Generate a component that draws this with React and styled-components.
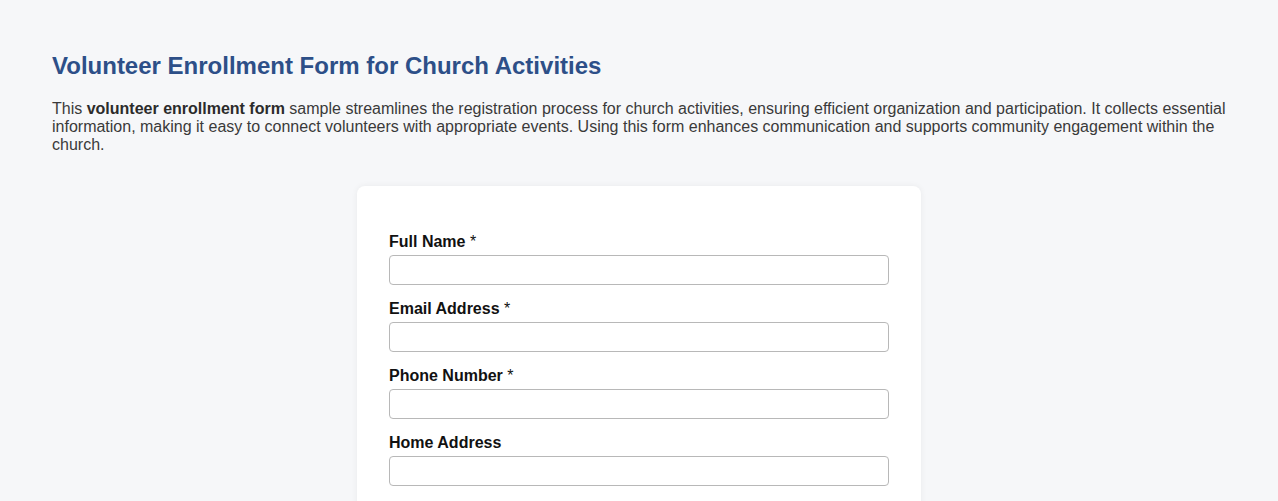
import React from "react";
import styled, { createGlobalStyle } from "styled-components";

const GlobalStyle = createGlobalStyle`
  body {
    margin: 0;
    background: #f6f7f9;
    font-family: "Liberation Sans", Arial, sans-serif;
  }
`;

const Page = styled.div`
  padding: 52px 52px 40px;
`;

const Title = styled.h1`
  margin: 0 0 20px;
  font-size: 24px;
  line-height: 28px;
  font-weight: 700;
  color: #2d4f88;
`;

const Intro = styled.p`
  margin: 0 0 32px;
  font-size: 16px;
  line-height: 18px;
  color: #3a3a3a;

  strong {
    color: #2b2b2b;
  }
`;

const Card = styled.form`
  width: 564px;
  box-sizing: border-box;
  margin: 0 auto;
  padding: 46px 32px 32px;
  background: #fff;
  border-radius: 8px;
  box-shadow: 0 0 6px rgba(0, 0, 0, 0.06);
`;

const Field = styled.div`
  display: flex;
  flex-direction: column;
  margin-bottom: 14px;
`;

const Label = styled.label`
  font-size: 16px;
  line-height: 20px;
  font-weight: 700;
  color: #111;
  margin-bottom: 3px;
`;

const Required = styled.span`
  font-weight: 400;
`;

const Input = styled.input`
  height: 30px;
  box-sizing: border-box;
  border: 1px solid #b8b8b8;
  border-radius: 4px;
  padding: 4px 8px;
  font-size: 15px;
  font-family: inherit;
  background: #fff;
`;

const fields = [
  { id: "name", label: "Full Name", type: "text", required: true },
  { id: "email", label: "Email Address", type: "email", required: true },
  { id: "phone", label: "Phone Number", type: "tel", required: true },
  { id: "address", label: "Home Address", type: "text" },
];

export default function App() {
  return (
    <Page>
      <GlobalStyle />
      <Title>Volunteer Enrollment Form for Church Activities</Title>
      <Intro>
        This <strong>volunteer enrollment form</strong> sample streamlines the
        registration process for church activities, ensuring efficient
        organization and participation. It collects essential information,
        making it easy to connect volunteers with appropriate events. Using this
        form enhances communication and supports community engagement within
        the church.
      </Intro>
      <Card onSubmit={(e) => e.preventDefault()}>
        {fields.map((f) => (
          <Field key={f.id}>
            <Label htmlFor={f.id}>
              {f.label}
              {f.required && <Required> *</Required>}
            </Label>
            <Input id={f.id} type={f.type} />
          </Field>
        ))}
      </Card>
    </Page>
  );
}
